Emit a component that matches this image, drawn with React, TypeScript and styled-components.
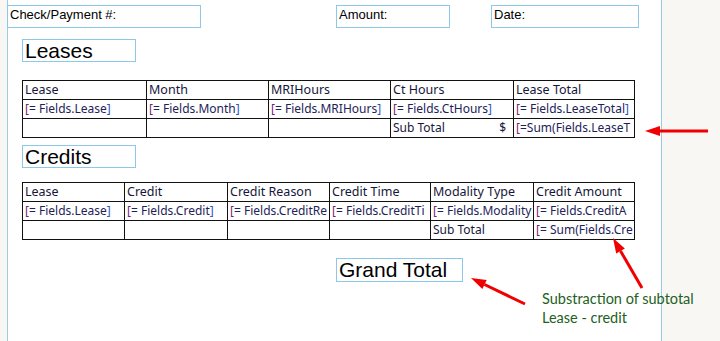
import styled, { createGlobalStyle } from 'styled-components';

const GlobalStyle = createGlobalStyle`
  html, body {
    margin: 0;
    padding: 0;
    background: #f8f7f4;
    overflow: hidden;
  }
`;

const Canvas = styled.div`
  position: relative;
  width: 720px;
  height: 341px;
  padding-left: 7px;
  box-sizing: border-box;
  background: #f8f7f4;
  font-family: 'Liberation Sans', Arial, sans-serif;
`;

const Sheet = styled.div`
  width: 653px;
  height: 336px;
  padding-top: 5px;
  background: #ffffff;
  border-left: 1px solid #9ccbe8;
  border-right: 1px solid #9ccbe8;
`;

const TopRow = styled.div`
  display: flex;
  margin-left: -1px;
`;

const FieldBox = styled.div<{ $width: number; $offset?: number }>`
  width: ${({ $width }) => $width}px;
  height: 23px;
  margin-left: ${({ $offset = 0 }) => $offset}px;
  box-sizing: border-box;
  border: 1px solid #8ec8e8;
  padding: 1px 2px;
  font-size: 13px;
  line-height: 15px;
  color: #000;
`;

const TitleBox = styled.div<{ $top: number; $left?: number; $width?: number; $height?: number }>`
  width: ${({ $width = 114 }) => $width}px;
  height: ${({ $height = 23 }) => $height}px;
  margin-top: ${({ $top }) => $top}px;
  margin-left: ${({ $left = 14 }) => $left}px;
  box-sizing: border-box;
  border: 1px solid #8ec8e8;
  padding-left: 2px;
  font-size: 21px;
  line-height: 22px;
  color: #000;
  white-space: nowrap;
`;

const Grid = styled.div<{ $cols: number[]; $top: number }>`
  display: grid;
  grid-template-columns: ${({ $cols }) => $cols.map((c) => `${c}px`).join(' ')};
  grid-auto-rows: 19px;
  margin-top: ${({ $top }) => $top}px;
  margin-left: 14px;
  width: max-content;
  border-left: 1px solid #111;
  border-top: 1px solid #111;
`;

const Cell = styled.div<{ $head?: boolean }>`
  display: flex;
  justify-content: space-between;
  align-items: center;
  box-sizing: border-box;
  border-right: 1px solid #111;
  border-bottom: 1px solid #111;
  padding: 0 7px 0 2px;
  overflow: hidden;
  white-space: nowrap;
  font-family: 'Noto Sans', 'DejaVu Sans', sans-serif;
  font-size: ${({ $head }) => ($head ? '12.5px' : '12px')};
  line-height: 18px;
  color: #15163a;
`;

const Open = styled.span`
  color: #7d1c6c;
`;

const Body = styled.span`
  color: #1d2358;
`;

const Close = styled.span`
  color: #2b55c4;
`;

const Note = styled.div`
  position: absolute;
  left: 542px;
  top: 289px;
  font-family: Lato, 'Open Sans', sans-serif;
  font-size: 14.5px;
  line-height: 19px;
  color: #235f23;
  white-space: nowrap;
`;

const Arrows = styled.svg`
  position: absolute;
  left: 0;
  top: 0;
  pointer-events: none;
`;

// expressions wider than their textbox are shown cut short, without the closing bracket
type CellValue = string | { expr: string; open?: boolean } | { label: string; unit: string };

const renderCell = (value: CellValue, head: boolean, key: string) => {
  if (typeof value === 'string') {
    return (
      <Cell key={key} $head={head}>
        {value}
      </Cell>
    );
  }
  if ('expr' in value) {
    return (
      <Cell key={key}>
        <span>
          <Open>[</Open>
          <Body>{value.expr}</Body>
          {!value.open && <Close>]</Close>}
        </span>
      </Cell>
    );
  }
  return (
    <Cell key={key}>
      <span>{value.label}</span>
      <span>{value.unit}</span>
    </Cell>
  );
};

const leaseCols = [124, 122, 122, 123, 121];
const leaseRows: CellValue[][] = [
  ['Lease', 'Month', 'MRIHours', 'Ct Hours', 'Lease Total'],
  [
    { expr: '= Fields.Lease' },
    { expr: '= Fields.Month' },
    { expr: '= Fields.MRIHours' },
    { expr: '= Fields.CtHours' },
    { expr: '= Fields.LeaseTotal' },
  ],
  ['', '', '', { label: 'Sub Total', unit: '$' }, { expr: '=Sum(Fields.LeaseT', open: true }],
];

const creditCols = [102, 103, 102, 101, 103, 101];
const creditRows: CellValue[][] = [
  ['Lease', 'Credit', 'Credit Reason', 'Credit Time', 'Modality Type', 'Credit Amount'],
  [
    { expr: '= Fields.Lease' },
    { expr: '= Fields.Credit' },
    { expr: '= Fields.CreditRe', open: true },
    { expr: '= Fields.CreditTi', open: true },
    { expr: '= Fields.Modality', open: true },
    { expr: '= Fields.CreditA', open: true },
  ],
  ['', '', '', '', 'Sub Total', { expr: '= Sum(Fields.Cre', open: true }],
];

const ReportTable = ({ cols, rows, top }: { cols: number[]; rows: CellValue[][]; top: number }) => (
  <Grid $cols={cols} $top={top}>
    {rows.map((row, r) => row.map((value, c) => renderCell(value, r === 0, `${r}-${c}`)))}
  </Grid>
);

// red callout arrow from tail to tip
const Arrow = ({ x1, y1, x2, y2 }: { x1: number; y1: number; x2: number; y2: number }) => {
  const angle = Math.atan2(y2 - y1, x2 - x1);
  const len = 15;
  const half = 5;
  const bx = x2 - len * Math.cos(angle);
  const by = y2 - len * Math.sin(angle);
  const px = -Math.sin(angle) * half;
  const py = Math.cos(angle) * half;
  return (
    <g>
      <line x1={x1} y1={y1} x2={bx} y2={by} stroke="#f00000" strokeWidth={3} />
      <polygon points={`${x2},${y2} ${bx + px},${by + py} ${bx - px},${by - py}`} fill="#f00000" />
    </g>
  );
};

export default function App() {
  return (
    <>
      <GlobalStyle />
      <Canvas>
        <Sheet>
          <TopRow>
            <FieldBox $width={194}>Check/Payment #:</FieldBox>
            <FieldBox $width={114} $offset={135}>Amount:</FieldBox>
            <FieldBox $width={148} $offset={41}>Date:</FieldBox>
          </TopRow>
          <TitleBox $top={11}>Leases</TitleBox>
          <ReportTable cols={leaseCols} rows={leaseRows} top={18} />
          <TitleBox $top={7}>Credits</TitleBox>
          <ReportTable cols={creditCols} rows={creditRows} top={14} />
          <TitleBox $top={18} $left={328} $width={127} $height={24}>
            Grand Total
          </TitleBox>
        </Sheet>
        <Note>
          Substraction of subtotal
          <br />
          Lease - credit
        </Note>
        <Arrows width={720} height={341} viewBox="0 0 720 341">
          <Arrow x1={708} y1={131} x2={645} y2={131} />
          <Arrow x1={525} y1={304} x2={471} y2={278} />
          <Arrow x1={642} y1={288} x2={613} y2={238} />
        </Arrows>
      </Canvas>
    </>
  );
}
